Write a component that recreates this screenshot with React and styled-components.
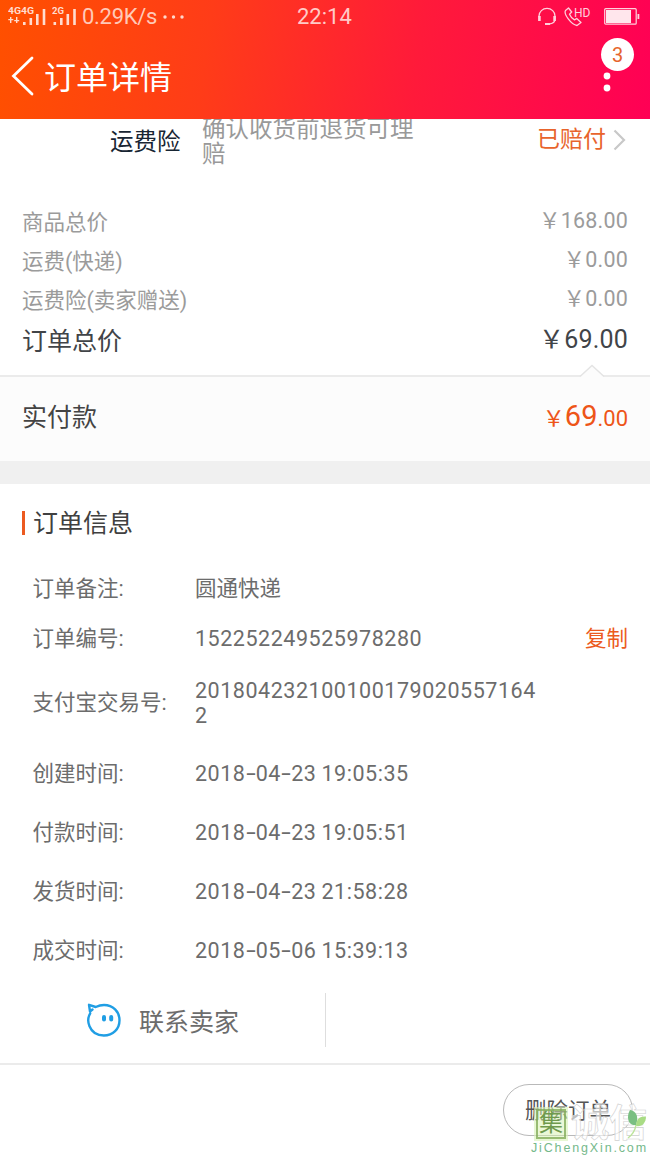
import styled, { createGlobalStyle } from 'styled-components'

const GlobalStyle = createGlobalStyle`
	* {
		box-sizing: border-box;
	}
	body {
		margin: 0;
		background-color: #fff;
		font-family: Roboto, 'Noto Sans CJK SC', sans-serif;
	}
`

const prices = [
	{ label: '商品总价', value: '168.00' },
	{ label: '运费(快递)', value: '0.00' },
	{ label: '运费险(卖家赠送)', value: '0.00' },
]

const details = [
	{ label: '订单备注:', value: '圆通快递', height: 50, plain: true },
	{ label: '订单编号:', value: '152252249525978280', height: 51, copy: true },
	{ label: '支付宝交易号:', value: '2018042321001001790205571642', height: 77 },
	{ label: '创建时间:', date: ['2018', '04', '23 19:05:35'], height: 65 },
	{ label: '付款时间:', date: ['2018', '04', '23 19:05:51'], height: 53 },
	{ label: '发货时间:', date: ['2018', '04', '23 21:58:28'], height: 65 },
	{ label: '成交时间:', date: ['2018', '05', '06 15:39:13'], height: 52 },
]

const SignalIcon = ({ label, arrows }) => (
	<svg width={arrows ? 39 : 26} height='20' viewBox={arrows ? '0 0 39 20' : '0 0 26 20'} fill='#ffdccf'>
		<text x='0' y='7' fontSize='8.5' fontWeight='700' textLength={arrows ? 26 : 12} lengthAdjust='spacingAndGlyphs'>
			{label}
		</text>
		{arrows && <path d='M2 10h1.4v6H2zM.3 12h5v1.3h-5zM8 10h1.4v6H8zM6.2 13h5v1.3h-5z' />}
		<path
			transform={arrows ? 'translate(15 0)' : 'translate(1.5 0)'}
			d='M0 15h2.6v3H0zM6.5 11h2.6v7H6.5zM13 7h2.6v11H13zM19.7 2h2.6v16h-2.6z'
		/>
	</svg>
)

const App = () => {
	return (
		<Page>
			<GlobalStyle />
			<Header>
				<StatusBar>
					<SignalIcon label='4G4G' arrows />
					<SignalIcon label='2G' />
					<Speed>0.29K/s</Speed>
					<svg width='22' height='4' fill='#ffd9cc'>
						<circle cx='2' cy='2' r='1.7' />
						<circle cx='10.5' cy='2' r='1.7' />
						<circle cx='19' cy='2' r='1.7' />
					</svg>
					<Clock>22:14</Clock>
					<StatusIcons>
						<svg width='20' height='20' viewBox='0 0 20 20' fill='none' stroke='#ffd0dc' strokeWidth='1.3'>
							<path d='M2 10V9a8 7.6 0 0 1 16 0v3c0 3-2 4.4-5 4.8' />
							<path d='M2.4 9v5M17.6 9v5' strokeWidth='2.6' />
							<path d='M8 17h5' strokeWidth='2' />
						</svg>
						<svg width='28' height='24' viewBox='0 0 28 24' fill='none' stroke='#ffd0dc' strokeWidth='1.3'>
							<path d='M4.5 3 1.5 5.5C-.5 9 7 19.5 13 20.5l4-3-4.3-4-2.2 1.4C8.5 14 6.5 11.5 5.5 9.2L7.7 7Z' strokeLinejoin='round' />
							<text x='10' y='12' fontSize='13.5' textLength='16.5' lengthAdjust='spacingAndGlyphs' fill='#ffd0dc' stroke='none'>
								HD
							</text>
						</svg>
						<svg width='36' height='18' viewBox='0 0 36 18'>
							<rect x='.7' y='.7' width='31.5' height='15.5' rx='1' fill='none' stroke='#ffd0dc' strokeWidth='1.2' />
							<path d='M2 2h25v13H2z' fill='#ffe6ec' />
							<path d='M33.5 6h1.8v5h-1.8z' fill='#ffd0dc' />
						</svg>
					</StatusIcons>
				</StatusBar>
				<TitleBar>
					<svg width='23' height='40' viewBox='0 0 23 40' fill='none' stroke='#fff' strokeWidth='2.8'>
						<path d='M21 2 2.5 20 21 38' strokeLinecap='round' />
					</svg>
					<Title>订单详情</Title>
					<More>
						<svg width='8' height='24' fill='#fff'>
							<circle cx='4' cy='6' r='3.4' />
							<circle cx='4' cy='18' r='3.4' />
						</svg>
						<Badge>3</Badge>
					</More>
				</TitleBar>
			</Header>

			<Insurance>
				<InsuranceName>运费险</InsuranceName>
				<InsuranceText>确认收货前退货可理赔</InsuranceText>
				<InsuranceState>已赔付</InsuranceState>
				<svg width='13' height='22' viewBox='0 0 13 22' fill='none' stroke='#c8c8c8' strokeWidth='2.2'>
					<path d='M1.5 1.5 11 11 1.5 20.5' />
				</svg>
			</Insurance>

			<Prices>
				{prices.map((price) => (
					<PriceRow key={price.label}>
						<span>{price.label}</span>
						<Amount>￥{price.value}</Amount>
					</PriceRow>
				))}
				<PriceRow $total>
					<span>订单总价</span>
					<Amount>￥69.00</Amount>
				</PriceRow>
			</Prices>

			<Paid>
				<Notch width='26' height='14' viewBox='0 0 26 14'>
					<path d='M1 13 13 1.5 25 13v1H1z' fill='#fcfcfc' />
					<path d='M1 12.5 13 1.5l12 11' fill='none' stroke='#e4e4e4' strokeWidth='1.5' />
				</Notch>
				<span>实付款</span>
				<PaidAmount>
					￥<b>69</b>.00
				</PaidAmount>
			</Paid>

			<Info>
				<InfoTitle>订单信息</InfoTitle>
				{details.map((item) => (
					<InfoRow key={item.label} $height={item.height}>
						<InfoLabel>{item.label}</InfoLabel>
						{item.date ? (
							<InfoValue>
								{item.date[0]}
								<Dash>-</Dash>
								{item.date[1]}
								<Dash>-</Dash>
								{item.date[2]}
							</InfoValue>
						) : (
							<InfoValue $plain={item.plain}>{item.value}</InfoValue>
						)}
						{item.copy && <Copy>复制</Copy>}
					</InfoRow>
				))}
			</Info>

			<Contact>
				<ContactSeller>
					<svg width='36' height='36' viewBox='0 0 36 36' fill='none' stroke='#209ee4' strokeWidth='2.4'>
						<path d='M4.2 11.3C2 15 1.7 20 3.5 24.3 6 30.5 11.5 33.5 17.8 33.5 27 33.5 33.5 27 33.5 18.2 33.5 9.5 27 3 18 3c-3.2 0-5.8.8-8.3 2L3 2.8 4 9.5 6.5 7.5' strokeLinejoin='round' strokeLinecap='round' />
						<path d='M18 15v2.5M25.2 15v2.5' strokeWidth='4' strokeLinecap='round' />
					</svg>
					<span>联系卖家</span>
				</ContactSeller>
			</Contact>

			<Footer>
				<DeleteButton type='button'>删除订单</DeleteButton>
				<Watermark>
					<WatermarkName>
						<Stamp>集</Stamp>
						<Outline>诚信</Outline>
					</WatermarkName>
					<WatermarkUrl>JiChengXin.com</WatermarkUrl>
					<Leaf width='20' height='31' viewBox='0 0 20 31'>
						<path d='M3 1C9 2 12 7 9 16 1 17-1 8 3 1Z' fill='#7abf82' />
						<path d='M9 17C9 10 13 7 19 7.5 19 14 15 18 9 17Z' fill='#a9dc85' />
						<path d='M9 16C8 22 5 26 1 29' fill='none' stroke='#bce49b' strokeWidth='1.5' />
					</Leaf>
				</Watermark>
			</Footer>
		</Page>
	)
}

export default App

const Page = styled.main`
	width: 650px;
	height: 1155px;
	overflow: hidden;
	display: flex;
	flex-direction: column;
	background-color: #fff;
	font-weight: 400;
`

const Header = styled.header`
	height: 119px;
	flex-shrink: 0;
	background: linear-gradient(98deg, #ff5000 0%, #ff3c18 32%, #ff1a3a 64%, #ff0055 100%);
	color: #fff;
`

const StatusBar = styled.div`
	height: 33px;
	padding: 0 10px 0 8px;
	display: flex;
	align-items: center;
	svg {
		flex-shrink: 0;
	}
	> svg:nth-child(2) {
		margin-left: 5px;
	}
`

const Speed = styled.span`
	width: 75px;
	margin: 0 6px 0 4px;
	font-size: 22px;
	letter-spacing: -0.3px;
	color: #ffc9b8;
	white-space: nowrap;
`

const Clock = styled.span`
	margin-left: 112px;
	font-size: 22px;
	color: #ffcbc8;
`

const StatusIcons = styled.div`
	margin-left: auto;
	height: 24px;
	display: flex;
	align-items: center;
	gap: 7px;
	svg:last-child {
		margin-left: 5px;
	}
`

const TitleBar = styled.div`
	height: 86px;
	padding: 0 39px 0 11px;
	display: flex;
	align-items: center;
`

const Title = styled.h1`
	margin: -3px auto 0 10px;
	font-size: 32px;
	font-weight: 400;
`

const More = styled.div`
	position: relative;
	height: 24px;
	margin-top: 12px;
`

const Badge = styled.span`
	position: absolute;
	left: -2px;
	top: -32px;
	width: 33px;
	height: 33px;
	border-radius: 50%;
	background-color: #fff;
	color: #e6642c;
	font-size: 20px;
	line-height: 35px;
	text-align: center;
`

const Insurance = styled.section`
	height: 82px;
	flex-shrink: 0;
	overflow: hidden;
	padding: 0 24px 0 110px;
	display: flex;
	align-items: flex-start;
	svg {
		margin-top: 10px;
		margin-left: 7px;
	}
`

const InsuranceName = styled.span`
	width: 92px;
	margin-top: 6px;
	font-size: 23.5px;
	line-height: 34px;
	color: #182533;
`

const InsuranceText = styled.p`
	width: 214px;
	margin: -2px auto 0 0;
	font-size: 23.5px;
	line-height: 25px;
	color: #999;
`

const InsuranceState = styled.span`
	margin-top: 4px;
	font-size: 23px;
	line-height: 34px;
	color: #e8642c;
`

const Prices = styled.section`
	height: 174px;
	flex-shrink: 0;
`

const PriceRow = styled.div`
	height: ${({ $total }) => ($total ? 42 : 39)}px;
	padding: 0 22px;
	display: flex;
	align-items: center;
	justify-content: space-between;
	font-size: ${({ $total }) => ($total ? 25 : 21.5)}px;
	color: ${({ $total }) => ($total ? '#414448' : '#9b9b9b')};
`

const Amount = styled.span`
	margin-top: -5px;
	letter-spacing: 0.2px;
`

const Paid = styled.section`
	position: relative;
	height: 86px;
	flex-shrink: 0;
	padding: 0 22px 8px;
	display: flex;
	align-items: center;
	justify-content: space-between;
	border-top: 2px solid #ebebeb;
	background-color: #fcfcfc;
	font-size: 25px;
	color: #444;
`

const Notch = styled.svg`
	position: absolute;
	left: 579px;
	top: -13px;
`

const PaidAmount = styled.span`
	margin-top: 2px;
	font-size: 22px;
	color: #ee5518;
	b {
		font-size: 29px;
		font-weight: 400;
	}
`

const Info = styled.section`
	height: 518px;
	flex-shrink: 0;
	border-top: 23px solid #f0f0f0;
	padding: 27px 22px 0;
`

const InfoTitle = styled.h2`
	height: 24px;
	margin: 0 0 28px;
	padding-left: 8px;
	border-left: 3px solid #ec5a20;
	font-size: 25px;
	line-height: 25px;
	font-weight: 400;
	color: #404040;
`

const InfoRow = styled.div`
	height: ${({ $height }) => $height}px;
	padding-left: 10.5px;
	display: flex;
	align-items: center;
	font-size: 21.5px;
	line-height: 25px;
	color: #6c6c6c;
`

const InfoLabel = styled.span`
	width: 162.5px;
`

const InfoValue = styled.span`
	width: 346px;
	letter-spacing: ${({ $plain }) => ($plain ? 0 : 0.54)}px;
	word-spacing: -0.8px;
	word-break: break-all;
`

const Dash = styled.span`
	display: inline-block;
	width: 10.2px;
	text-align: center;
	letter-spacing: 0;
	transform: scaleX(1.6);
`

const Copy = styled.span`
	margin-left: auto;
	color: #ec5a20;
`

const Contact = styled.section`
	height: 86px;
	flex-shrink: 0;
	padding-top: 14px;
	border-bottom: 2px solid #ebebeb;
`

const ContactSeller = styled.div`
	width: 326px;
	height: 54px;
	padding-left: 86px;
	display: flex;
	align-items: center;
	gap: 17px;
	border-right: 1px solid #dedede;
	font-size: 25px;
	color: #6c6c6c;
`

const Footer = styled.footer`
	position: relative;
	flex: 1;
	padding: 19px 17px 0 0;
	display: flex;
	justify-content: flex-end;
	align-items: flex-start;
`

const DeleteButton = styled.button`
	width: 130px;
	height: 52px;
	padding: 0 0 3px;
	border: 1px solid #b9b9b9;
	border-radius: 26px;
	background-color: #fff;
	font-family: inherit;
	font-size: 21.5px;
	color: #555;
`

const Watermark = styled.div`
	position: absolute;
	left: 531px;
	top: 44px;
	width: 119px;
`

const WatermarkName = styled.div`
	display: flex;
	padding-left: 5px;
	height: 34px;
`

const Stamp = styled.span`
	width: 30px;
	height: 30px;
	border: 2px solid #83ad5acc;
	outline: 2px solid #d9f2b9a0;
	background-color: #d5f1b080;
	font-size: 24px;
	line-height: 25px;
	text-align: center;
	color: #6f9a4d;
`

const Outline = styled.span`
	margin-left: 5px;
	font-size: 38px;
	line-height: 29px;
	font-weight: 700;
	color: #ffffffa0;
	-webkit-text-stroke: 0.6px #cfcfcf;
	white-space: nowrap;
`

const WatermarkUrl = styled.div`
	margin-top: -2px;
	font-family: 'Liberation Sans', sans-serif;
	font-size: 12.5px;
	line-height: 14px;
	letter-spacing: 1.85px;
	color: #75b98b;
	white-space: nowrap;
`

const Leaf = styled.svg`
	position: absolute;
	left: 96px;
	top: 0;
`
